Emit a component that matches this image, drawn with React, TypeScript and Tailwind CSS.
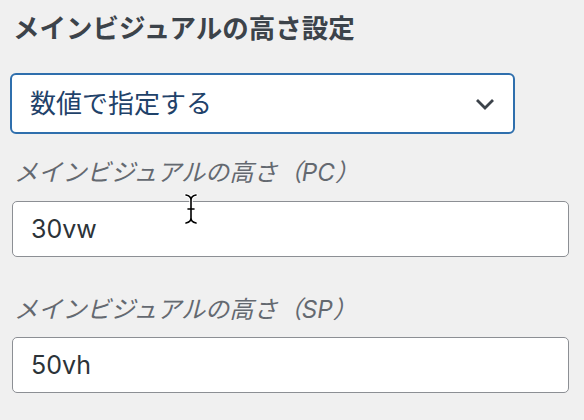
import React from "react";

const font = { fontFamily: 'Inter, "Noto Sans CJK JP", sans-serif' };

export default function App() {
  return (
    <div
      className="relative w-[584px] h-[420px] bg-[#f0f0f0] overflow-hidden"
      style={font}
    >
      <div className="flex flex-col">
        <h2 className="ml-[13px] mt-[11px] h-[34px] text-[26.5px] leading-[34px] font-bold text-[#3c434a]">
          メインビジュアルの高さ設定
        </h2>
        <div className="ml-[10px] mt-[28px] w-[505px] h-[61px] rounded-[6px] border-2 border-[#2f6fad] bg-white flex items-center justify-between pl-[18px] pr-[16px]">
          <span className="text-[26px] leading-none text-[#1f426a]">数値で指定する</span>
          <svg width="22" height="14" viewBox="0 0 22 14" className="mr-[1px]">
            <path d="M3 3 L11 11 L19 3" fill="none" stroke="#3c434a" strokeWidth="2.8" />
          </svg>
        </div>
        <label className="ml-[14px] mt-[24px] h-[30px] text-[24.2px] leading-[30px] italic text-[#646970]">
          メインビジュアルの高さ（PC）
        </label>
        <div className="ml-[12px] mt-[13px] w-[557px] h-[56px] rounded-[5px] border border-[#8c8f94] bg-white flex items-center pl-[18px]">
          <span className="text-[25px] leading-none text-[#2c3338]">30vw</span>
        </div>
        <label className="ml-[14px] mt-[38px] h-[30px] text-[24.2px] leading-[30px] italic text-[#646970]">
          メインビジュアルの高さ（SP）
        </label>
        <div className="ml-[12px] mt-[12px] w-[557px] h-[56px] rounded-[5px] border border-[#8c8f94] bg-white flex items-center pl-[18px]">
          <span className="text-[25px] leading-none text-[#2c3338]">50vh</span>
        </div>
      </div>
      <svg
        className="absolute left-[183px] top-[193px]"
        width="16"
        height="32"
        viewBox="0 0 16 32"
      >
        <path
          d="M3 2 Q8 3 8 7 L8 25 Q8 29 3 30 M13 2 Q8 3 8 7 M8 25 Q8 29 13 30 M5 16 L11 16"
          fill="none"
          stroke="#ffffff"
          strokeWidth="3.5"
          strokeLinecap="round"
        />
        <path
          d="M3 2 Q8 3 8 7 L8 25 Q8 29 3 30 M13 2 Q8 3 8 7 M8 25 Q8 29 13 30 M5 16 L11 16"
          fill="none"
          stroke="#000000"
          strokeWidth="1.6"
          strokeLinecap="round"
        />
      </svg>
    </div>
  );
}
